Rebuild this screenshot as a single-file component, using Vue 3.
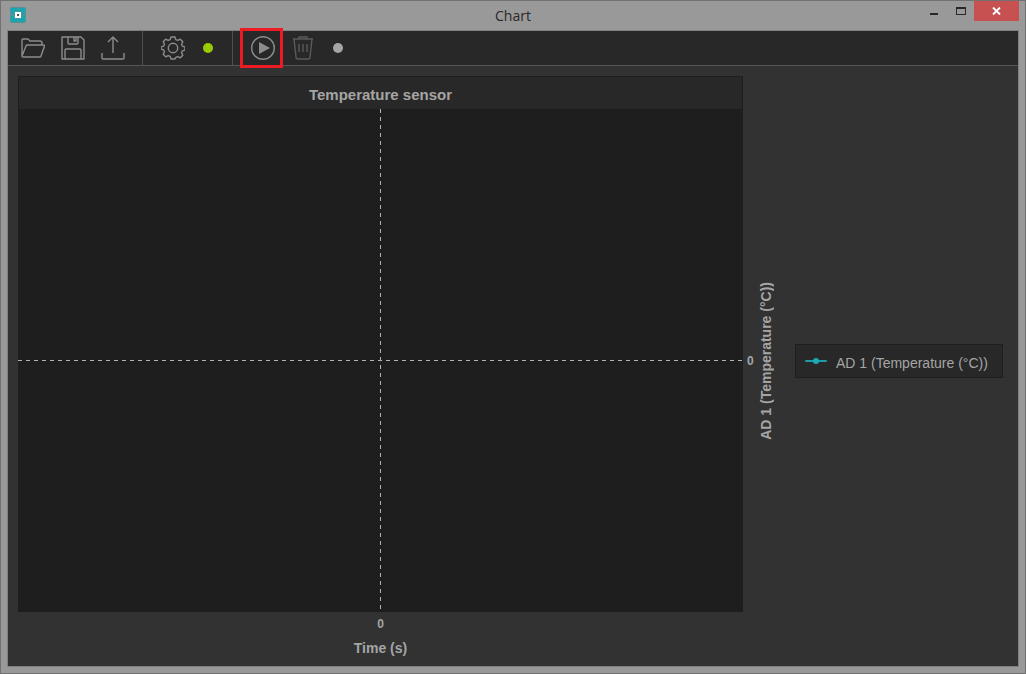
<script setup>
import { ref } from 'vue'

const title = ref('Chart')
const chartTitle = ref('Temperature sensor')
const channel = ref('AD 1 (Temperature (°C))')
</script>

<template>
  <div class="window">
    <header class="titlebar">
      <svg class="app-icon" width="16" height="16" viewBox="0 0 16 16">
        <rect width="16" height="16" rx="2" fill="#5b8f94" />
        <path d="M1 1h6v3H4v3H1zM9 1h6v6h-3V4H9zM1 9h3v3h3v3H1zM12 9h3v6H9v-3h3z" fill="#0fa8b4" />
        <rect x="3" y="3" width="10" height="10" fill="#13a5b1" />
        <rect x="4" y="4" width="8" height="8" fill="#4b979e" />
        <rect x="5" y="5" width="6" height="6" fill="#fff" />
        <rect x="7" y="7" width="2" height="2" fill="#555" />
      </svg>
      <h1 class="window-title">{{ title }}</h1>
      <div class="controls">
        <button type="button" class="control" aria-label="Minimize">
          <svg width="10" height="10" viewBox="0 0 10 10"><path d="M1 7h8v2H1z" fill="#282828" /></svg>
        </button>
        <button type="button" class="control" aria-label="Maximize">
          <svg width="10" height="8" viewBox="0 0 10 8">
            <path fill-rule="evenodd" d="M0 0h10v8H0zM1 2v5h8V2z" fill="#282828" />
          </svg>
        </button>
        <button type="button" class="control close" aria-label="Close">
          <svg width="9" height="8" viewBox="0 0 9 8"><path d="M1 .5l7 7M8 .5l-7 7" stroke="#fff" stroke-width="1.9" /></svg>
        </button>
      </div>
    </header>

    <main class="client">
      <nav class="toolbar">
        <button type="button" class="tool" aria-label="Open">
          <svg class="icon" viewBox="0 0 24 24">
            <path d="M1 20V4q0-1 1-1h5l2 2h10q2 0 2 2v2M1 20L5 10q0-1 1-1h16q2 0 1.500 1L20 20q0 1-1 1H2q-1 0-1-1z" />
          </svg>
        </button>
        <button type="button" class="tool" aria-label="Save">
          <svg class="icon" viewBox="0 0 24 24">
            <path d="M1 1h19l3 3v19H1zM7 1v6q0 1 1 1h8q1 0 1-1V1M13 1v4h2V1M4 23V14q0-1 1-1h14q1 0 1 1v9" />
          </svg>
        </button>
        <button type="button" class="tool" aria-label="Export">
          <svg class="icon" viewBox="0 0 24 24">
            <path d="M12 17V1M7 6l5-5 5 5M1 17v5q0 1 1 1h20q1 0 1-1v-5" />
          </svg>
        </button>
        <span class="separator"></span>
        <button type="button" class="tool" aria-label="Settings">
          <svg class="icon" viewBox="0 0 24 24">
            <path d="M10 1h4l.8 2.600 2 .8 2.500-1.200 2.500 2.500-1.200 2.500.8 2 2.600.8v3l-2.600.8-.8 2 1.200 2.500-2.500 2.500-2.500-1.200-2 .8L14 23h-4l-.8-2.600-2-.8-2.500 1.200-2.500-2.500 1.200-2.500-.8-2L0 13V11l2.600-.8.8-2-1.200-2.500 2.500-2.500 2.500 1.200 2-.8z" />
            <circle cx="12" cy="12" r="4.700" />
          </svg>
        </button>
        <span class="status ready"></span>
        <span class="separator"></span>
        <button type="button" class="tool highlighted" aria-label="Start">
          <svg class="icon" viewBox="0 0 24 24">
            <circle cx="12" cy="12" r="11.300" />
            <path class="solid" d="M8 6l11 6-11 6z" />
          </svg>
        </button>
        <button type="button" class="tool" aria-label="Clear" disabled>
          <svg class="icon" viewBox="0 0 24 24">
            <path d="M2 3h20M8 3V1h8v2M3 3l2 18q0 2 2 2h10q2 0 2-2l2-18M8 8v8M12 8v8M16 8v8" />
          </svg>
        </button>
        <span class="status"></span>
      </nav>

      <section class="chart">
        <h2 class="chart-title">{{ chartTitle }}</h2>
        <svg class="plot">
          <line x1="0" y1="50%" x2="100%" y2="50%" />
          <line x1="50%" y1="0" x2="50%" y2="100%" />
        </svg>
        <div class="y-axis">
          <span class="tick">0</span>
          <span class="axis-label vertical">{{ channel }}</span>
        </div>
        <div class="legend">
          <svg width="22" height="6" viewBox="0 0 22 6">
            <path d="M1 3h20" stroke="#1e9ca8" stroke-width="2" stroke-linecap="round" />
            <circle cx="11" cy="3" r="3" fill="#1caab8" />
          </svg>
          <span class="legend-label">{{ channel }}</span>
        </div>
        <div class="x-axis">
          <span class="tick">0</span>
          <span class="axis-label">Time (s)</span>
        </div>
      </section>
    </main>
  </div>
</template>

<style>
body {
  margin: 0;
}
</style>

<style scoped>
.window {
  box-sizing: border-box;
  display: flex;
  flex-direction: column;
  min-height: 100vh;
  padding: 0 6px 6px;
  border: 1px solid #717171;
  background: #999;
  color: #a5a5a5;
  font-family: 'Liberation Sans', Arial, sans-serif;
}

.titlebar {
  display: grid;
  grid-template-columns: 1fr auto 1fr;
  height: 29px;
}

.app-icon {
  margin: 6px 3px;
}

.window-title {
  margin: 0;
  color: #282828;
  font: 400 14px/30px 'Open Sans', sans-serif;
}

.controls {
  display: flex;
  justify-content: flex-end;
}

button {
  display: flex;
  align-items: center;
  justify-content: center;
  padding: 0;
  border: 0;
  background: none;
}

.control {
  width: 27px;
  height: 20px;
}

.close {
  width: 45px;
  background: #c75050;
}

.client {
  flex: 1;
  display: flex;
  flex-direction: column;
  border: 1px solid #808080;
  background: #323232;
}

.toolbar {
  display: flex;
  align-items: center;
  height: 34px;
  padding-left: 5px;
  border-bottom: 1px solid #555;
  background: #282828;
}

.tool {
  position: relative;
  width: 40px;
  height: 34px;
}

.tool:disabled {
  opacity: 0.5;
}

.highlighted::after {
  content: '';
  position: absolute;
  inset: -3px 0 -3px -3px;
  border: 3px solid #ed1c24;
}

.icon {
  width: 24px;
  height: 24px;
  fill: none;
  stroke: #8c8c8c;
  stroke-width: 1.4;
  stroke-linejoin: round;
}

.icon .solid {
  fill: #8c8c8c;
  stroke: none;
}

.separator {
  align-self: stretch;
  width: 1px;
  margin: 0 10px 0 9px;
  background: #505050;
}

.status {
  width: 10px;
  height: 10px;
  margin-left: 10px;
  border-radius: 50%;
  background: #a5a5a5;
}

.ready {
  margin-right: 10px;
  background: #99cc00;
}

.chart {
  flex: 1;
  display: grid;
  grid-template-columns: 1fr 52px 208px;
  grid-template-rows: 33px 1fr 54px;
  padding: 10px 15px 0 10px;
}

.chart-title {
  box-sizing: border-box;
  margin: 0;
  border: 1px solid #1e1e1e;
  border-bottom: 0;
  background: #282828;
  font-size: 15px;
  line-height: 36px;
  text-align: center;
}

.plot {
  grid-row: 2;
  width: 100%;
  height: 100%;
  background: #1e1e1e;
}

.plot line {
  stroke: #b4b4b4;
  stroke-dasharray: 4 4;
  shape-rendering: crispEdges;
}

.y-axis {
  grid-row: 2;
  display: flex;
  align-items: center;
  gap: 4px;
  padding-left: 4px;
}

.tick {
  font-size: 12px;
  font-weight: bold;
  line-height: 16px;
}

.axis-label {
  font-size: 14px;
  font-weight: bold;
  line-height: 16px;
}

.vertical {
  writing-mode: vertical-rl;
  transform: rotate(180deg);
}

.legend {
  grid-row: 2;
  align-self: center;
  display: flex;
  align-items: center;
  gap: 9px;
  box-sizing: border-box;
  height: 34px;
  padding-left: 9px;
  border: 1px solid #1e1e1e;
  background: #282828;
  font-size: 14px;
  line-height: 16px;
  white-space: nowrap;
}

.legend-label {
  padding-top: 4px;
}

.x-axis {
  grid-row: 3;
  display: flex;
  flex-direction: column;
  align-items: center;
  gap: 8px;
  padding-top: 4px;
}
</style>
